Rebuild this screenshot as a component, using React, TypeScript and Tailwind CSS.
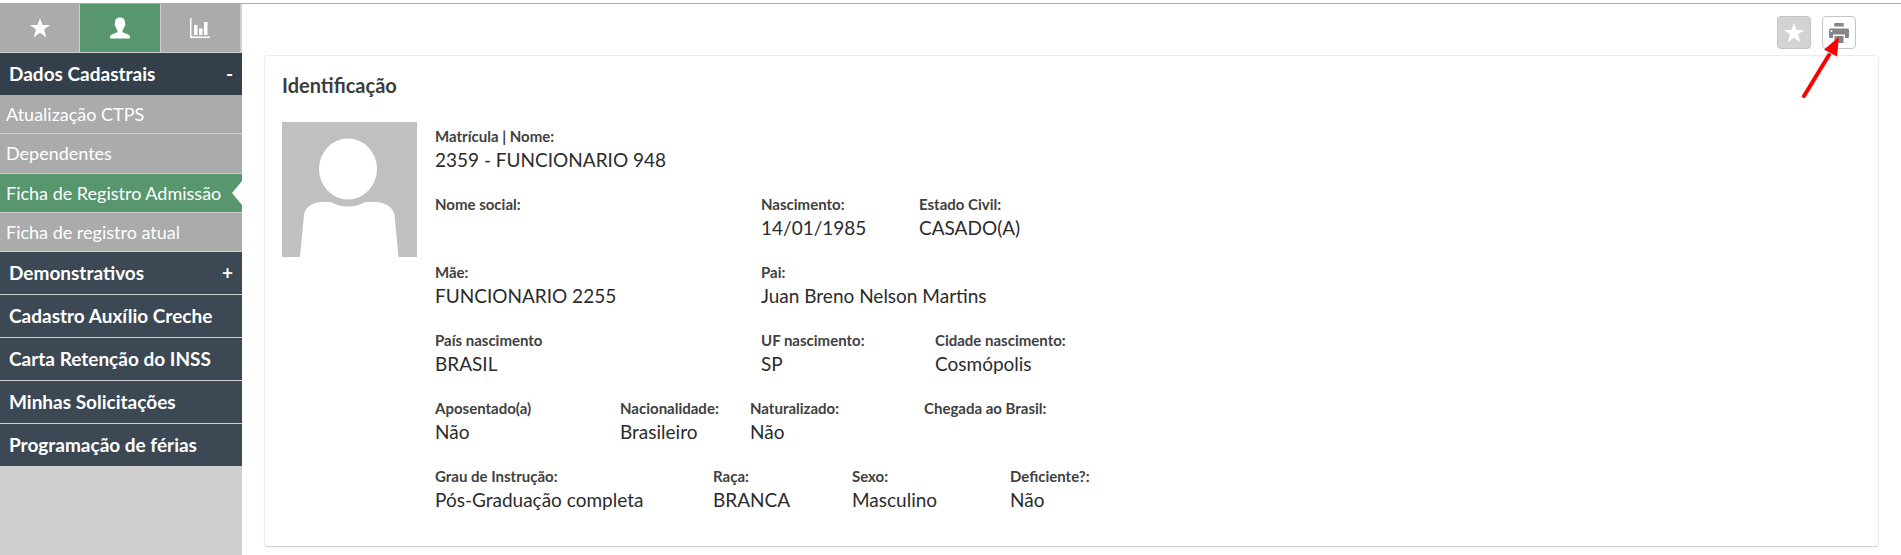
import type { ReactNode } from "react";

interface Field {
  label: string;
  value?: string;
  width: string;
}

const subItems = [
  { name: "Atualização CTPS" },
  { name: "Dependentes" },
  { name: "Ficha de Registro Admissão", active: true },
  { name: "Ficha de registro atual" },
];

const menuItems = [
  { name: "Demonstrativos", sign: "+" },
  { name: "Cadastro Auxílio Creche" },
  { name: "Carta Retenção do INSS" },
  { name: "Minhas Solicitações" },
  { name: "Programação de férias" },
];

const rows: Field[][] = [
  [{ label: "Matrícula | Nome:", value: "2359 - FUNCIONARIO 948", width: "w-[326px]" }],
  [
    { label: "Nome social:", width: "w-[326px]" },
    { label: "Nascimento:", value: "14/01/1985", width: "w-[158px]" },
    { label: "Estado Civil:", value: "CASADO(A)", width: "w-[158px]" },
  ],
  [
    { label: "Mãe:", value: "FUNCIONARIO 2255", width: "w-[326px]" },
    { label: "Pai:", value: "Juan Breno Nelson Martins", width: "w-[326px]" },
  ],
  [
    { label: "País nascimento", value: "BRASIL", width: "w-[326px]" },
    { label: "UF nascimento:", value: "SP", width: "w-[174px]" },
    { label: "Cidade nascimento:", value: "Cosmópolis", width: "w-[174px]" },
  ],
  [
    { label: "Aposentado(a)", value: "Não", width: "w-[185px]" },
    { label: "Nacionalidade:", value: "Brasileiro", width: "w-[130px]" },
    { label: "Naturalizado:", value: "Não", width: "w-[174px]" },
    { label: "Chegada ao Brasil:", width: "w-[174px]" },
  ],
  [
    { label: "Grau de Instrução:", value: "Pós-Graduação completa", width: "w-[278px]" },
    { label: "Raça:", value: "BRANCA", width: "w-[139px]" },
    { label: "Sexo:", value: "Masculino", width: "w-[158px]" },
    { label: "Deficiente?:", value: "Não", width: "w-[158px]" },
  ],
];

const StarIcon = () => (
  <svg viewBox="0 0 20 20" className="w-5 h-5" fill="currentColor" aria-hidden="true">
    <path d="M10 0l2.500 7h7.500l-6 4.500 2.300 7.800L10 14.800l-6.300 4.500L6 11.500 0 7h7.500z" />
  </svg>
);

const UserIcon = () => (
  <svg viewBox="0 0 20 22" className="w-5 h-[22px]" fill="currentColor" aria-hidden="true">
    <path d="M10 .5c3.400 0 5 1.800 5 4.800 0 1 .6 1.300.4 2.400-.2 1-.8 1.200-1 2-.3 1.300-1.200 2.300-1.700 3v2c.3 1 2.300 1.600 4.300 2.400 2 .8 3 1.500 3 3.400v1H0v-1c0-1.900 1-2.600 3-3.400 2-.8 4-1.400 4.300-2.400v-2c-.5-.7-1.400-1.700-1.700-3-.2-.8-.8-1-1-2-.2-1.100.4-1.400.4-2.400 0-3 1.600-4.800 5-4.800z" />
  </svg>
);

const ChartIcon = () => (
  <svg viewBox="0 0 20 20" className="w-5 h-5" fill="currentColor" aria-hidden="true">
    <path d="M0 0h1.500v18.500H20V20H0zM4 7h3.500v10H4zM9 10.500h3.500V17H9zM14 4h3.500v13H14z" />
  </svg>
);

const PrinterIcon = () => (
  <svg viewBox="0 0 20 20" className="w-5 h-5" fill="#858585" aria-hidden="true">
    <path d="M5.500 0h9l.5 3.500H5zM1.500 5.500h17c1 0 1.500.6 1.500 1.500v6.500c0 1-.5 1.500-1.500 1.500H16v-3.500H4V15H1.500C.5 15 0 14.500 0 13.500V7c0-.9.500-1.500 1.500-1.500zM5.500 13h9v7h-9z" />
    <circle cx="2.500" cy="8" r="1" fill="#fff" />
  </svg>
);

const Tab = ({ label, active, children }: { label: string; active?: boolean; children: ReactNode }) => (
  <button
    type="button"
    aria-label={label}
    className={`flex flex-1 h-12 items-center justify-center border-r border-[#cfcfcf] text-white ${
      active ? "bg-[#58966d]" : "bg-[#ababab]"
    }`}
  >
    {children}
  </button>
);

const Sidebar = () => (
  <nav className="w-[242px] shrink-0 bg-[#cfcfcf] text-white">
    <div className="flex border-b border-[#cfcfcf] pr-px">
      <Tab label="Favoritos">
        <StarIcon />
      </Tab>
      <Tab label="Funcionário" active>
        <UserIcon />
      </Tab>
      <Tab label="Indicadores">
        <ChartIcon />
      </Tab>
    </div>
    <a href="#" className="flex h-[42px] items-center justify-between bg-[#333f4b] px-[9px] text-[19px] font-bold">
      <span>Dados Cadastrais</span>
      <span>-</span>
    </a>
    <ul className="flex h-[157px] flex-col">
      {subItems.map((item) => (
        <li key={item.name} className="flex-1">
          <a
            href="#"
            className={`flex h-full items-center justify-between border-b border-[#cfcfcf] pl-[6px] text-lg ${
              item.active ? "bg-[#58966d]" : "bg-[#ababab]"
            }`}
          >
            {item.name}
            {item.active && (
              <svg viewBox="0 0 10 24" className="w-[10px] h-6" fill="#fff" aria-hidden="true">
                <path d="M10 0v24L0 12z" />
              </svg>
            )}
          </a>
        </li>
      ))}
    </ul>
    <ul>
      {menuItems.map((item) => (
        <li key={item.name}>
          <a
            href="#"
            className="flex h-[43px] items-center justify-between border-b border-[#cfcfcf] bg-[#3c4854] px-[9px] text-[19px] font-bold"
          >
            <span>{item.name}</span>
            {item.sign && <span>{item.sign}</span>}
          </a>
        </li>
      ))}
    </ul>
  </nav>
);

const Avatar = () => (
  <svg viewBox="0 0 135 135" className="w-[135px] h-[135px] shrink-0" role="img" aria-label="Foto">
    <rect width="135" height="135" fill="#c0c0c0" />
    <ellipse cx="66" cy="47" rx="29" ry="30.500" fill="#fff" />
    <path
      d="M18 135l4-42c1-8 8-12.500 18-13h9c10 6 24 6 34 0h9c12 .5 19 5 20.500 13l4 42z"
      fill="#fff"
    />
  </svg>
);

export default function App() {
  return (
    <div className="flex min-h-screen flex-col bg-white pt-[3px] font-['Lato',sans-serif]">
      <div className="flex flex-1 border-t border-[#ababab]">
        <Sidebar />
        <main className="flex flex-1 flex-col pt-3 pr-[22px] pb-2 pl-[22px]">
          <div className="relative flex justify-end gap-[11px] pr-[23px]">
            <button
              type="button"
              aria-label="Favoritar"
              className="flex h-[33px] w-[34px] items-center justify-center rounded border border-[#c4c4c4] bg-[#d3d3d3] text-white"
            >
              <StarIcon />
            </button>
            <button
              type="button"
              aria-label="Imprimir"
              className="flex h-[33px] w-[34px] items-center justify-center rounded border border-[#c4c4c4] bg-white"
            >
              <PrinterIcon />
            </button>
            <svg viewBox="0 0 40 62" className="absolute top-5 right-[39px] w-10 h-[62px]" aria-hidden="true">
              <path d="M4 60L29 19" stroke="#f00" strokeWidth="4" strokeLinecap="round" />
              <path d="M39 1L37 20.500 24 13.500z" fill="#f00" />
            </svg>
          </div>
          <section className="mt-1.5 flex-1 rounded-sm border border-[#ececec] border-b-[#d4d4d4] px-[17px] pt-[15px] shadow-xs">
            <h2 className="text-xl leading-7 font-bold text-[#3d3d3d]">Identificação</h2>
            <div className="mt-[23px] flex gap-[18px]">
              <Avatar />
              <div className="flex flex-col gap-5 pt-0.5">
                {rows.map((row) => (
                  <dl key={row[0].label} className="flex">
                    {row.map((field) => (
                      <div key={field.label} className={`${field.width} whitespace-nowrap`}>
                        <dt className="text-[15px] leading-6 font-bold text-[#414141]">{field.label}</dt>
                        <dd className="h-6 text-[19px] leading-6 text-[#2b2b2b]">{field.value}</dd>
                      </div>
                    ))}
                  </dl>
                ))}
              </div>
            </div>
          </section>
        </main>
      </div>
    </div>
  );
}
